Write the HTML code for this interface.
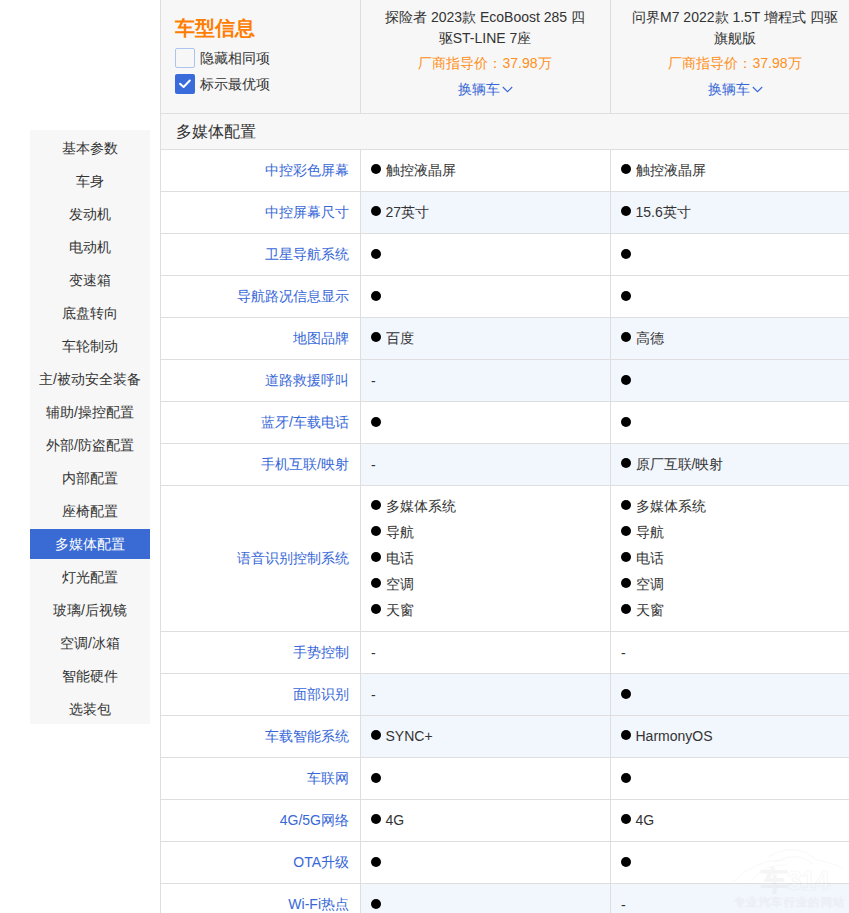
<!DOCTYPE html><html><head><meta charset="utf-8"><style>
*{margin:0;padding:0;box-sizing:border-box}
html,body{width:849px;height:913px;overflow:hidden;background:#fff}
body{position:relative;font-family:"Liberation Sans",sans-serif;font-size:14px;color:#333}
.a{position:absolute}
.side{left:30px;top:130px;width:120px;height:594px;background:#f7f7f7}
.si{position:absolute;left:0;width:120px;height:30px;line-height:30px;text-align:center;color:#333;white-space:nowrap}
.si.on{background:#3a6bd5;color:#fff}
.hdr{left:160px;top:0;width:700px;height:113px;background:#f7f7f7}
.sec{left:160px;top:113px;width:700px;height:36px;background:#f7f7f7}
.vl{position:absolute;width:1px;background:#dedede}
.hl{position:absolute;height:1px;background:#dedede;left:160px;width:700px}
.diff{position:absolute;background:#f2f6fd}
.lab{position:absolute;left:160px;width:189px;text-align:right;color:#3868d8;white-space:nowrap}
.val{position:absolute;white-space:nowrap;color:#333}
.dot{display:inline-block;width:10px;height:10px;border-radius:50%;background:#000;vertical-align:middle;position:relative;top:-2px;margin-right:4.5px}
.title{left:175px;top:14px;font-size:20px;font-weight:bold;color:#ff7d00;line-height:28px}
.cb{position:absolute;left:175px;width:20px;height:20px;border-radius:2px}
.cbt{position:absolute;left:200px;line-height:20px;color:#333}
.car{position:absolute;width:250px;text-align:center;line-height:21px;padding:0 14px}
.price{position:absolute;width:250px;text-align:center;color:#ff8f1a;line-height:20px}
.chg{position:absolute;width:250px;text-align:center;color:#3868d8;line-height:20px}
</style></head><body>
<div class="a side">
<div class="si" style="top:3px">基本参数</div>
<div class="si" style="top:36px">车身</div>
<div class="si" style="top:69px">发动机</div>
<div class="si" style="top:102px">电动机</div>
<div class="si" style="top:135px">变速箱</div>
<div class="si" style="top:168px">底盘转向</div>
<div class="si" style="top:201px">车轮制动</div>
<div class="si" style="top:234px">主/被动安全装备</div>
<div class="si" style="top:267px">辅助/操控配置</div>
<div class="si" style="top:300px">外部/防盗配置</div>
<div class="si" style="top:333px">内部配置</div>
<div class="si" style="top:366px">座椅配置</div>
<div class="si on" style="top:399px">多媒体配置</div>
<div class="si" style="top:432px">灯光配置</div>
<div class="si" style="top:465px">玻璃/后视镜</div>
<div class="si" style="top:498px">空调/冰箱</div>
<div class="si" style="top:531px">智能硬件</div>
<div class="si" style="top:564px">选装包</div>
</div>
<div class="a hdr"></div>
<div class="a sec"></div>
<div class="a title">车型信息</div>
<div class="cb" style="top:48px;border:1px solid #adc4ef;background:transparent"></div>
<div class="cbt" style="top:48px">隐藏相同项</div>
<div class="cb" style="top:74px;background:#3a6bdb"><svg width="20" height="20" viewBox="0 0 20 20" style="position:absolute;left:0;top:0"><path d="M5 9.8 L8.6 13 L14.8 6.5" stroke="#fff" stroke-width="2" fill="none" stroke-linecap="round" stroke-linejoin="round"/></svg></div>
<div class="cbt" style="top:74px">标示最优项</div>
<div class="car" style="left:360px;top:7px">探险者 2023款 EcoBoost 285 四<br>驱ST-LINE 7座</div>
<div class="price" style="left:360px;top:53px">厂商指导价：37.98万</div>
<div class="chg" style="left:360px;top:79px;padding-right:13px">换辆车</div>
<svg width="11" height="8" viewBox="0 0 11 8" style="position:absolute;left:502px;top:86px"><path d="M0.8 1 L5.5 5.7 L10.2 1" stroke="#3868d8" stroke-width="1.1" fill="none"/></svg>
<div class="car" style="left:610px;top:7px">问界M7 2022款 1.5T 增程式 四驱<br>旗舰版</div>
<div class="price" style="left:610px;top:53px">厂商指导价：37.98万</div>
<div class="chg" style="left:610px;top:79px;padding-right:13px">换辆车</div>
<svg width="11" height="8" viewBox="0 0 11 8" style="position:absolute;left:752px;top:86px"><path d="M0.8 1 L5.5 5.7 L10.2 1" stroke="#3868d8" stroke-width="1.1" fill="none"/></svg>
<div class="a" style="left:176px;top:122px;line-height:20px;font-size:16px;color:#333">多媒体配置</div>
<div class="hl" style="top:149px"></div>
<div class="lab" style="top:160px;line-height:20px">中控彩色屏幕</div>
<div class="val" style="left:371px;top:157px;line-height:26px"><span class="dot"></span>触控液晶屏</div>
<div class="val" style="left:621px;top:157px;line-height:26px"><span class="dot"></span>触控液晶屏</div>
<div class="diff" style="left:361px;top:192px;width:499px;height:41px"></div>
<div class="hl" style="top:191px"></div>
<div class="lab" style="top:202px;line-height:20px">中控屏幕尺寸</div>
<div class="val" style="left:371px;top:199px;line-height:26px"><span class="dot"></span>27英寸</div>
<div class="val" style="left:621px;top:199px;line-height:26px"><span class="dot"></span>15.6英寸</div>
<div class="hl" style="top:233px"></div>
<div class="lab" style="top:244px;line-height:20px">卫星导航系统</div>
<div class="val" style="left:371px;top:241px;line-height:26px"><span class="dot" style="top:-1px"></span></div>
<div class="val" style="left:621px;top:241px;line-height:26px"><span class="dot" style="top:-1px"></span></div>
<div class="hl" style="top:275px"></div>
<div class="lab" style="top:286px;line-height:20px">导航路况信息显示</div>
<div class="val" style="left:371px;top:283px;line-height:26px"><span class="dot" style="top:-1px"></span></div>
<div class="val" style="left:621px;top:283px;line-height:26px"><span class="dot" style="top:-1px"></span></div>
<div class="diff" style="left:361px;top:318px;width:499px;height:41px"></div>
<div class="hl" style="top:317px"></div>
<div class="lab" style="top:328px;line-height:20px">地图品牌</div>
<div class="val" style="left:371px;top:325px;line-height:26px"><span class="dot"></span>百度</div>
<div class="val" style="left:621px;top:325px;line-height:26px"><span class="dot"></span>高德</div>
<div class="diff" style="left:361px;top:360px;width:499px;height:41px"></div>
<div class="hl" style="top:359px"></div>
<div class="lab" style="top:370px;line-height:20px">道路救援呼叫</div>
<div class="val" style="left:371px;top:367px;line-height:26px"><span style="position:relative;top:1px">-</span></div>
<div class="val" style="left:621px;top:367px;line-height:26px"><span class="dot" style="top:-1px"></span></div>
<div class="hl" style="top:401px"></div>
<div class="lab" style="top:412px;line-height:20px">蓝牙/车载电话</div>
<div class="val" style="left:371px;top:409px;line-height:26px"><span class="dot" style="top:-1px"></span></div>
<div class="val" style="left:621px;top:409px;line-height:26px"><span class="dot" style="top:-1px"></span></div>
<div class="diff" style="left:361px;top:444px;width:499px;height:41px"></div>
<div class="hl" style="top:443px"></div>
<div class="lab" style="top:454px;line-height:20px">手机互联/映射</div>
<div class="val" style="left:371px;top:451px;line-height:26px"><span style="position:relative;top:1px">-</span></div>
<div class="val" style="left:621px;top:451px;line-height:26px"><span class="dot"></span>原厂互联/映射</div>
<div class="hl" style="top:485px"></div>
<div class="lab" style="top:548px;line-height:20px">语音识别控制系统</div>
<div class="val" style="left:371px;top:493px;line-height:26px"><span class="dot"></span>多媒体系统</div>
<div class="val" style="left:371px;top:519px;line-height:26px"><span class="dot"></span>导航</div>
<div class="val" style="left:371px;top:545px;line-height:26px"><span class="dot"></span>电话</div>
<div class="val" style="left:371px;top:571px;line-height:26px"><span class="dot"></span>空调</div>
<div class="val" style="left:371px;top:597px;line-height:26px"><span class="dot"></span>天窗</div>
<div class="val" style="left:621px;top:493px;line-height:26px"><span class="dot"></span>多媒体系统</div>
<div class="val" style="left:621px;top:519px;line-height:26px"><span class="dot"></span>导航</div>
<div class="val" style="left:621px;top:545px;line-height:26px"><span class="dot"></span>电话</div>
<div class="val" style="left:621px;top:571px;line-height:26px"><span class="dot"></span>空调</div>
<div class="val" style="left:621px;top:597px;line-height:26px"><span class="dot"></span>天窗</div>
<div class="hl" style="top:631px"></div>
<div class="lab" style="top:642px;line-height:20px">手势控制</div>
<div class="val" style="left:371px;top:639px;line-height:26px"><span style="position:relative;top:1px">-</span></div>
<div class="val" style="left:621px;top:639px;line-height:26px"><span style="position:relative;top:1px">-</span></div>
<div class="diff" style="left:361px;top:674px;width:499px;height:41px"></div>
<div class="hl" style="top:673px"></div>
<div class="lab" style="top:684px;line-height:20px">面部识别</div>
<div class="val" style="left:371px;top:681px;line-height:26px"><span style="position:relative;top:1px">-</span></div>
<div class="val" style="left:621px;top:681px;line-height:26px"><span class="dot" style="top:-1px"></span></div>
<div class="diff" style="left:361px;top:716px;width:499px;height:41px"></div>
<div class="hl" style="top:715px"></div>
<div class="lab" style="top:726px;line-height:20px">车载智能系统</div>
<div class="val" style="left:371px;top:723px;line-height:26px"><span class="dot"></span>SYNC+</div>
<div class="val" style="left:621px;top:723px;line-height:26px"><span class="dot"></span>HarmonyOS</div>
<div class="hl" style="top:757px"></div>
<div class="lab" style="top:768px;line-height:20px">车联网</div>
<div class="val" style="left:371px;top:765px;line-height:26px"><span class="dot" style="top:-1px"></span></div>
<div class="val" style="left:621px;top:765px;line-height:26px"><span class="dot" style="top:-1px"></span></div>
<div class="hl" style="top:799px"></div>
<div class="lab" style="top:810px;line-height:20px">4G/5G网络</div>
<div class="val" style="left:371px;top:807px;line-height:26px"><span class="dot"></span>4G</div>
<div class="val" style="left:621px;top:807px;line-height:26px"><span class="dot"></span>4G</div>
<div class="hl" style="top:841px"></div>
<div class="lab" style="top:852px;line-height:20px">OTA升级</div>
<div class="val" style="left:371px;top:849px;line-height:26px"><span class="dot" style="top:-1px"></span></div>
<div class="val" style="left:621px;top:849px;line-height:26px"><span class="dot" style="top:-1px"></span></div>
<div class="diff" style="left:361px;top:884px;width:499px;height:41px"></div>
<div class="hl" style="top:883px"></div>
<div class="lab" style="top:894px;line-height:20px">Wi-Fi热点</div>
<div class="val" style="left:371px;top:891px;line-height:26px"><span class="dot" style="top:-1px"></span></div>
<div class="val" style="left:621px;top:891px;line-height:26px"><span style="position:relative;top:1px">-</span></div>
<div class="hl" style="top:925px"></div>
<div class="hl" style="top:113px"></div>
<div class="vl" style="left:160px;top:0;height:913px"></div>
<div class="vl" style="left:360px;top:0;height:113px"></div>
<div class="vl" style="left:360px;top:149px;height:764px"></div>
<div class="vl" style="left:610px;top:0;height:113px"></div>
<div class="vl" style="left:610px;top:149px;height:764px"></div>
<svg width="124" height="68" viewBox="0 0 124 68" style="position:absolute;left:725px;top:845px;opacity:0.2"><path d="M8 37 Q30 14 60 15" stroke="#d6d6d6" stroke-width="0.8" fill="none"/><path d="M26 36 Q40 18 62 20" stroke="#d6d6d6" stroke-width="0.8" fill="none"/><path d="M43 12 Q70 -4 92 15 Q110 18 118 24" stroke="#d6d6d6" stroke-width="0.8" fill="none"/><path d="M50 17 Q72 5 88 19" stroke="#d6d6d6" stroke-width="0.8" fill="none"/><text x="36" y="45" font-family="Liberation Sans" font-weight="bold" font-size="27" fill="none" stroke="#d0d0d0" stroke-width="0.7" letter-spacing="-1">车314</text><text x="9" y="61" font-family="Liberation Sans" font-weight="bold" font-size="10.5" fill="none" stroke="#d8d8d8" stroke-width="0.4" letter-spacing="1.4">专业汽车行业的网站</text></svg>
</body></html>
